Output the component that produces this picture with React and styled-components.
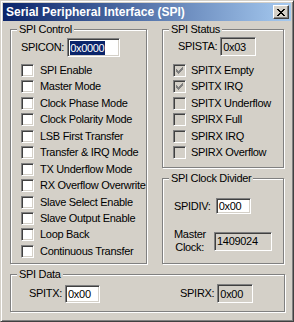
import React from 'react';
import styled, { createGlobalStyle } from 'styled-components';

const Global = createGlobalStyle`
  html, body { margin: 0; padding: 0; background: #D4D0C8; }
  body { font-family: "Liberation Sans", Arial, sans-serif; font-size: 11px; color: #000; }
  * { box-sizing: border-box; }
`;

const Window = styled.div`
  width: 294px;
  height: 322px;
  border: 1px solid;
  border-color: #D4D0C8 #404040 #404040 #D4D0C8;
  box-shadow: inset 1px 1px 0 #fff, inset -1px -1px 0 #808080;
  padding: 2px;
  background: #D4D0C8;
  display: flex;
  flex-direction: column;
`;

const TitleBar = styled.div`
  height: 18px;
  flex: none;
  display: flex;
  align-items: center;
  justify-content: space-between;
  padding: 0 2px 0 3px;
  background: linear-gradient(to right, #0A246A, #A6CAF0);
`;

const TitleText = styled.div`
  color: #fff;
  font-weight: bold;
  font-size: 12px;
  line-height: 18px;
  white-space: nowrap;
`;

const CloseButton = styled.div`
  width: 16px;
  height: 14px;
  background: #D4D0C8;
  border: 1px solid;
  border-color: #fff #404040 #404040 #fff;
  box-shadow: inset -1px -1px 0 #808080;
  display: flex;
  align-items: center;
  justify-content: center;
  padding-right: 1px;
`;

const Body = styled.div`
  flex: 1;
  padding: 8px 6px 0 7px;
  display: flex;
  flex-direction: column;
  letter-spacing: -0.3px;
`;

const TopRow = styled.div`
  display: flex;
  gap: 15px;
  height: 235px;
`;

const RightColumn = styled.div`
  width: 122px;
  display: flex;
  flex-direction: column;
  gap: 10px;
`;

const Group = styled.div`
  position: relative;
  width: ${p => p.$w ? `${p.$w}px` : 'auto'};
  height: ${p => p.$h}px;
  flex: none;
  border: 1px solid #808080;
  box-shadow: inset 1px 1px 0 #fff, 1px 1px 0 #fff;
  padding: ${p => p.$pad};
  margin-top: ${p => p.$mt || 0}px;
`;

const Caption = styled.div`
  position: absolute;
  top: -7px;
  left: 6px;
  padding: 0 2px;
  background: #D4D0C8;
  line-height: 13px;
  white-space: nowrap;
`;

const FieldRow = styled.div`
  display: flex;
  align-items: center;
  margin-left: ${p => p.$ml || 0}px;
  margin-top: ${p => p.$mt || 0}px;
  gap: ${p => p.$gap || 3}px;
`;

const Label = styled.span`
  white-space: nowrap;
  line-height: 13px;
  text-align: ${p => p.$right ? 'right' : 'left'};
  width: ${p => p.$w ? `${p.$w}px` : 'auto'};
`;

const TextBox = styled.div`
  width: ${p => p.$w}px;
  height: ${p => p.$h}px;
  border: 1px solid;
  border-color: #808080 #fff #fff #808080;
  box-shadow: inset 1px 1px 0 #404040, inset -1px -1px 0 #D4D0C8;
  background: ${p => p.$readOnly ? '#D4D0C8' : '#fff'};
  display: flex;
  align-items: center;
  padding-left: 2px;
  white-space: nowrap;
  flex: none;
`;

const Selected = styled.span`
  background: ${p => p.$on ? '#0A246A' : 'transparent'};
  color: ${p => p.$on ? '#fff' : '#000'};
  line-height: 14px;
  padding: 0 1px 0 0;
`;

const CheckList = styled.div`
  display: flex;
  flex-direction: column;
  margin-top: ${p => p.$mt}px;
  margin-left: ${p => p.$ml || 0}px;
`;

const CheckRow = styled.div`
  height: 16.45px;
  display: flex;
  align-items: center;
  gap: ${p => p.$gap || 6}px;
`;

const Box = styled.div`
  width: 13px;
  height: 13px;
  flex: none;
  border: 1px solid;
  border-color: #808080 #fff #fff #808080;
  box-shadow: inset 1px 1px 0 #404040, inset -1px -1px 0 #D4D0C8;
  background: ${p => p.$disabled ? '#D4D0C8' : '#fff'};
  display: flex;
  align-items: center;
  justify-content: center;
`;

const Check = ({ color }) => (
  <svg width="7" height="7" viewBox="0 0 7 7" shapeRendering="crispEdges">
    <path fill={color} d="M6 0h1v1h-1z M5 1h2v1h-2z M0 2h1v1h-1z M4 2h3v1h-3z M0 3h2v1h-2z M3 3h3v1h-3z M0 4h5v1h-5z M1 5h3v1h-3z M2 6h1v1h-1z" />
  </svg>
);

const CloseGlyph = () => (
  <svg width="8" height="7" viewBox="0 0 8 7" shapeRendering="crispEdges">
    <path fill="#000" d="M0 0h2v1h-2z M6 0h2v1h-2z M1 1h2v1h-2z M5 1h2v1h-2z M2 2h4v1h-4z M3 3h2v1h-2z M2 4h4v1h-4z M1 5h2v1h-2z M5 5h2v1h-2z M0 6h2v1h-2z M6 6h2v1h-2z" />
  </svg>
);

const CheckItem = ({ label, checked, disabled, gap }) => (
  <CheckRow $gap={gap}>
    <Box $disabled={disabled}>{checked && <Check color={disabled ? '#808080' : '#000'} />}</Box>
    <Label>{label}</Label>
  </CheckRow>
);

const controlItems = [
  'SPI Enable', 'Master Mode', 'Clock Phase Mode', 'Clock Polarity Mode',
  'LSB First Transfer', 'Transfer & IRQ Mode', 'TX Underflow Mode',
  'RX Overflow Overwrite', 'Slave Select Enable', 'Slave Output Enable',
  'Loop Back', 'Continuous Transfer',
];

const statusItems = [
  { label: 'SPITX Empty', checked: true },
  { label: 'SPITX IRQ', checked: true },
  { label: 'SPITX Underflow' },
  { label: 'SPIRX Full' },
  { label: 'SPIRX IRQ' },
  { label: 'SPIRX Overflow' },
];

export default function App() {
  return (
    <>
      <Global />
      <Window>
        <TitleBar>
          <TitleText>Serial Peripheral Interface (SPI)</TitleText>
          <CloseButton><CloseGlyph /></CloseButton>
        </TitleBar>
        <Body>
          <TopRow>
            <Group $w={137} $h={235} $pad="8px 0 0 10px">
              <Caption>SPI Control</Caption>
              <FieldRow>
                <Label>SPICON:</Label>
                <TextBox $w={53} $h={19}><Selected $on>0x0000</Selected></TextBox>
              </FieldRow>
              <CheckList $mt={5.3}>
                {controlItems.map(l => <CheckItem key={l} label={l} />)}
              </CheckList>
            </Group>
            <RightColumn>
              <Group $h={139} $pad="7px 0 0 15px">
                <Caption>SPI Status</Caption>
                <FieldRow>
                  <Label>SPISTA:</Label>
                  <TextBox $w={36} $h={19} $readOnly>0x03</TextBox>
                </FieldRow>
                <CheckList $mt={6.3} $ml={-5}>
                  {statusItems.map(s => (
                    <CheckItem key={s.label} label={s.label} checked={s.checked} disabled gap={5} />
                  ))}
                </CheckList>
              </Group>
              <Group $h={86} $pad="19px 0 0 11px">
                <Caption>SPI Clock Divider</Caption>
                <FieldRow $gap={5}>
                  <Label>SPIDIV:</Label>
                  <TextBox $w={35} $h={16}>0x00</TextBox>
                </FieldRow>
                <FieldRow $gap={10} $mt={14}>
                  <Label $right $w={30}>Master<br />Clock:</Label>
                  <TextBox $w={58} $h={19} $readOnly>1409024</TextBox>
                </FieldRow>
              </Group>
            </RightColumn>
          </TopRow>
          <Group $h={38} $mt={10} $pad="9px 0 0 18px">
            <Caption>SPI Data</Caption>
            <FieldRow>
              <FieldRow>
                <Label>SPITX:</Label>
                <TextBox $w={35} $h={18}>0x00</TextBox>
              </FieldRow>
              <FieldRow $ml={77}>
                <Label>SPIRX:</Label>
                <TextBox $w={36} $h={19} $readOnly>0x00</TextBox>
              </FieldRow>
            </FieldRow>
          </Group>
        </Body>
      </Window>
    </>
  );
}
